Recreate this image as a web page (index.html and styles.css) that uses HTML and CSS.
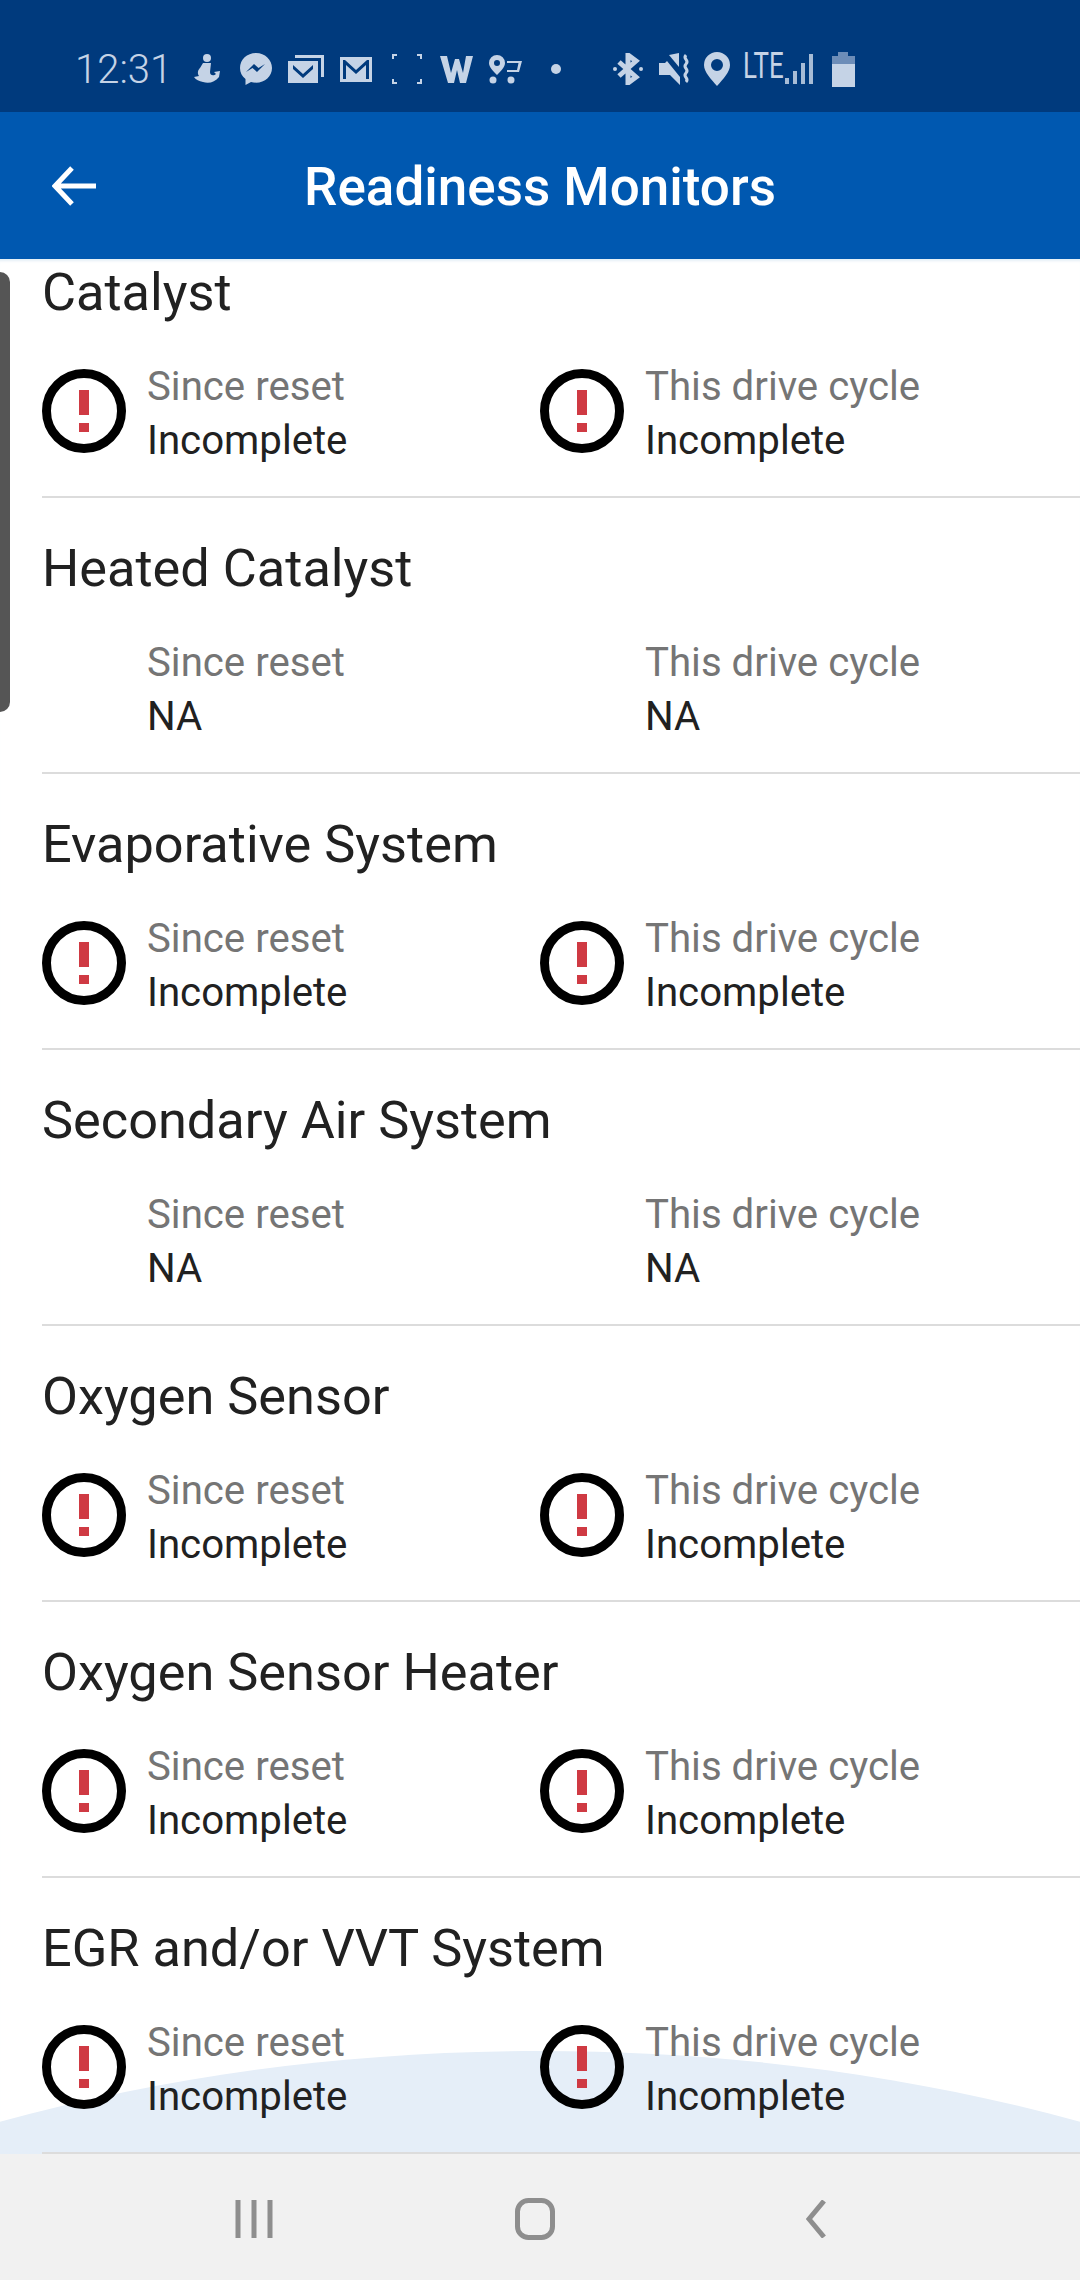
FILE: index.html
```html
<!DOCTYPE html>
<html lang="en">
<head>
  <meta charset="UTF-8" />
  <title>Readiness Monitors</title>
  <link rel="stylesheet" href="styles.css">
</head>
<body>

<svg class="defs" width="0" height="0">
  <symbol id="warn" viewBox="0 0 84 84">
    <circle cx="42" cy="42" r="37.500" fill="none" stroke="#000" stroke-width="9"/>
    <rect x="37" y="21" width="10" height="25" fill="#cf3a43"/>
    <rect x="37" y="54" width="10" height="9" fill="#cf3a43"/>
  </symbol>
</svg>

<div id="statusBar">
  <span class="time">12:31</span>
  <svg class="ic" style="width:27px;margin-left:28px" viewBox="0 0 27 30"><circle cx="14" cy="4" r="4"/><path d="M10 9h8l-1 9c0 4 4 4 6 2l-2-2 6-1-1 6c-4 5-10 7-16 5-4-1-7-2-9-5l5-1c-2-3-1-6 1-8l3-5z"/></svg>
  <svg class="ic" style="width:32px;margin-left:20px" viewBox="0 0 32 32"><path fill-rule="evenodd" d="M16 0C7 0 0 6.500 0 15c0 4.500 2 8.500 5.500 11v6l5.500-3c1.600.5 3.300.7 5 .7 9 0 16-6.500 16-14.700S25 0 16 0zM6 19l8-8 4.500 4 6.500-4-8 8-4.500-4z"/></svg>
  <svg class="ic" style="width:36px;margin-left:16px" viewBox="0 0 36 28"><path d="M7 0h29v22h-3V3H7z"/><path fill-rule="evenodd" d="M0 6h30v22H0zM5 10l10 9 10-9v4l-10 9-10-9z"/></svg>
  <svg class="ic" style="width:32px;margin-left:16px" viewBox="0 0 32 25"><path fill-rule="evenodd" d="M0 0h32v25H0zM3 3v19h3V8l10 9 10-9v14h3V3h-2L16 13 5 3z"/></svg>
  <svg class="ic" style="width:30px;margin-left:20px" viewBox="0 0 30 30"><path d="M0 0h5v2H2v3H0zM25 0h5v5h-2V2h-3zM0 25h2v3h3v2H0zM28 25h2v5h-5v-2h3z"/></svg>
  <svg class="ic" style="width:33px;margin-left:18px" viewBox="0 0 33 27"><path d="M0 0h7l4 17L15 3h4l4 14 3-17h7l-7 27h-6l-3-13-3 13H8z"/></svg>
  <svg class="ic" style="width:34px;margin-left:15px" viewBox="0 0 34 29"><path fill-rule="evenodd" d="M9 0a8 8 0 0 1 8 8c0 4-4 8-8 12-4-4-8-8-8-12a8 8 0 0 1 8-8zm0 5a3 3 0 1 0 0 6 3 3 0 0 0 0-6z"/><circle cx="5" cy="25" r="3.500"/><circle cx="23" cy="25" r="3.500"/><path d="M19 6h15l-3 11H19v-2h10l1.500-7H19z"/></svg>
  <span class="dot"></span>
  <svg class="ic" style="width:30px;margin-left:52px" viewBox="0 0 30 32"><path fill="none" stroke="#c5d3e6" stroke-width="5" d="M6 9l17 15-8 6V2l8 6L6 23"/><circle cx="2" cy="16" r="2"/><circle cx="28" cy="16" r="2"/></svg>
  <svg class="ic" style="width:33px;margin-left:15px" viewBox="0 0 33 32"><path d="M1 10h6l2-2 13 16v8L12 22H1z"/><path d="M11 2l10 12V0z"/><path fill="none" stroke="#c5d3e6" stroke-width="3" d="M28 2c-4 4 4 5 0 9s4 5 0 9 4 5 0 9"/></svg>
  <svg class="ic" style="width:26px;margin-left:13px" viewBox="0 0 26 34"><path fill-rule="evenodd" d="M13 0a13 13 0 0 1 13 13c0 7-7 14-13 21C7 27 0 20 0 13A13 13 0 0 1 13 0zm0 7a6 6 0 1 0 0 12 6 6 0 0 0 0-12z"/></svg>
  <span class="lte">LTE</span>
  <svg class="ic signal" style="width:28px;margin-left:10px" viewBox="0 0 28 30"><path d="M0 24h4v6H0zM8 17h4v13H8zM16 9h4v21h-4zM24 0h4v30h-4z"/></svg>
  <svg class="ic" style="width:23px;margin-left:19px" viewBox="0 0 23 35"><path fill="#6d8db8" d="M6 0h10v4h7v10H0V4h6z"/><path d="M0 12h23v23H0z"/></svg>
</div>

<div id="appBar">
  <svg class="backArrow" viewBox="0 0 44 40"><path fill="none" stroke="#fff" stroke-width="5" d="M20 2L3 20l17 18M3 20h41"/></svg>
  <h1>Readiness Monitors</h1>
</div>

<div id="list">
  <div class="scrollThumb"></div>
  <svg class="arc" viewBox="0 0 1080 102" preserveAspectRatio="none"><path fill="#e5eef8" d="M0 70C170 24 350 0 540 0s370 24 540 70v32H0z"/></svg>

  <div class="row firstRow">
    <div class="rowTitle">Catalyst</div>
    <div class="cols">
      <div class="col"><svg class="warnIcon"><use href="#warn"/></svg><div><div class="lbl">Since reset</div><div class="val">Incomplete</div></div></div>
      <div class="col"><svg class="warnIcon"><use href="#warn"/></svg><div><div class="lbl">This drive cycle</div><div class="val">Incomplete</div></div></div>
    </div>
  </div>

  <div class="row">
    <div class="rowTitle">Heated Catalyst</div>
    <div class="cols">
      <div class="col"><div class="noIcon"></div><div><div class="lbl">Since reset</div><div class="val">NA</div></div></div>
      <div class="col"><div class="noIcon"></div><div><div class="lbl">This drive cycle</div><div class="val">NA</div></div></div>
    </div>
  </div>

  <div class="row">
    <div class="rowTitle">Evaporative System</div>
    <div class="cols">
      <div class="col"><svg class="warnIcon"><use href="#warn"/></svg><div><div class="lbl">Since reset</div><div class="val">Incomplete</div></div></div>
      <div class="col"><svg class="warnIcon"><use href="#warn"/></svg><div><div class="lbl">This drive cycle</div><div class="val">Incomplete</div></div></div>
    </div>
  </div>

  <div class="row">
    <div class="rowTitle">Secondary Air System</div>
    <div class="cols">
      <div class="col"><div class="noIcon"></div><div><div class="lbl">Since reset</div><div class="val">NA</div></div></div>
      <div class="col"><div class="noIcon"></div><div><div class="lbl">This drive cycle</div><div class="val">NA</div></div></div>
    </div>
  </div>

  <div class="row">
    <div class="rowTitle">Oxygen Sensor</div>
    <div class="cols">
      <div class="col"><svg class="warnIcon"><use href="#warn"/></svg><div><div class="lbl">Since reset</div><div class="val">Incomplete</div></div></div>
      <div class="col"><svg class="warnIcon"><use href="#warn"/></svg><div><div class="lbl">This drive cycle</div><div class="val">Incomplete</div></div></div>
    </div>
  </div>

  <div class="row">
    <div class="rowTitle">Oxygen Sensor Heater</div>
    <div class="cols">
      <div class="col"><svg class="warnIcon"><use href="#warn"/></svg><div><div class="lbl">Since reset</div><div class="val">Incomplete</div></div></div>
      <div class="col"><svg class="warnIcon"><use href="#warn"/></svg><div><div class="lbl">This drive cycle</div><div class="val">Incomplete</div></div></div>
    </div>
  </div>

  <div class="row">
    <div class="rowTitle">EGR and/or VVT System</div>
    <div class="cols">
      <div class="col"><svg class="warnIcon"><use href="#warn"/></svg><div><div class="lbl">Since reset</div><div class="val">Incomplete</div></div></div>
      <div class="col"><svg class="warnIcon"><use href="#warn"/></svg><div><div class="lbl">This drive cycle</div><div class="val">Incomplete</div></div></div>
    </div>
  </div>
</div>

<div id="navBar">
  <svg class="navRecent" viewBox="0 0 38 40"><path fill="none" stroke="#8e8e8e" stroke-width="5" d="M3 1v38M19 1v38M35 1v38"/></svg>
  <svg class="navHome" viewBox="0 0 40 42"><rect x="2.500" y="2.500" width="35" height="37" rx="11" fill="none" stroke="#8e8e8e" stroke-width="5"/></svg>
  <svg class="navBack" viewBox="0 0 20 38"><path fill="none" stroke="#8e8e8e" stroke-width="5" d="M18 1L3 19l15 18"/></svg>
</div>

</body>
</html>
```

FILE: styles.css
```css
body {
  margin: 0;
  width: 1080px;
  height: 2280px;
  overflow: hidden;
  background: #fff;
  font-family: Roboto, sans-serif;
}

.defs {
  display: block;
  height: 0;
}

#statusBar {
  height: 112px;
  box-sizing: border-box;
  padding: 26px 0 0 75px;
  background: #003a7d;
  display: flex;
  align-items: center;
  color: #c5d3e6;
}

.time {
  font-size: 40px;
  font-weight: 300;
  width: 90px;
  white-space: nowrap;
}

.ic {
  flex: none;
  fill: #c5d3e6;
}

.signal {
  opacity: 0.85;
}

.dot {
  flex: none;
  width: 10px;
  height: 10px;
  margin-left: 29px;
  border-radius: 50%;
  background: #c5d3e6;
}

.lte {
  width: 32px;
  margin: -6px 0 0 13px;
  font-size: 36px;
  line-height: 36px;
  white-space: nowrap;
  transform: scaleX(0.72);
  transform-origin: left center;
}

#appBar {
  height: 147px;
  background: #0058b0;
  position: relative;
  display: flex;
  align-items: center;
  justify-content: center;
}

#appBar h1 {
  margin: 2px 0 0;
  color: #fff;
  font-size: 53px;
  font-weight: 500;
}

.backArrow {
  position: absolute;
  left: 52px;
  top: 54px;
  width: 44px;
  height: 40px;
}

#list {
  position: relative;
  height: 1895px;
  overflow: hidden;
  box-shadow: inset 0 4px 3px -2px #e4eff6;
}

.scrollThumb {
  position: absolute;
  left: 0;
  top: 13px;
  width: 10px;
  height: 440px;
  background: #555;
  border-radius: 0 10px 10px 0;
}

.arc {
  position: absolute;
  left: 0;
  bottom: 0;
  width: 1080px;
  height: 103px;
}

.row {
  position: relative;
  margin-left: 42px;
  padding: 40px 0 28px;
  border-bottom: 2px solid #dcdcdc;
}

.firstRow {
  padding-top: 3px;
}

.rowTitle {
  height: 60px;
  font-size: 52.300px;
  line-height: 60px;
  color: #212121;
}

.cols {
  display: grid;
  grid-template-columns: 498px 1fr;
  margin-top: 38px;
}

.col {
  display: flex;
  align-items: center;
  gap: 21px;
}

.warnIcon, .noIcon {
  flex: none;
  width: 84px;
  height: 84px;
  margin-top: -6px;
}

.lbl, .val {
  height: 54px;
  font-size: 40.200px;
  line-height: 54px;
  white-space: nowrap;
}

.lbl {
  color: #757575;
}

.val {
  color: #212121;
}

#navBar {
  height: 126px;
  background: #f1f1f1;
  position: relative;
}

#navBar svg {
  position: absolute;
}

.navRecent {
  left: 235px;
  top: 45px;
  width: 38px;
  height: 40px;
}

.navHome {
  left: 515px;
  top: 44px;
  width: 40px;
  height: 42px;
}

.navBack {
  left: 806px;
  top: 46px;
  width: 20px;
  height: 38px;
}
```
